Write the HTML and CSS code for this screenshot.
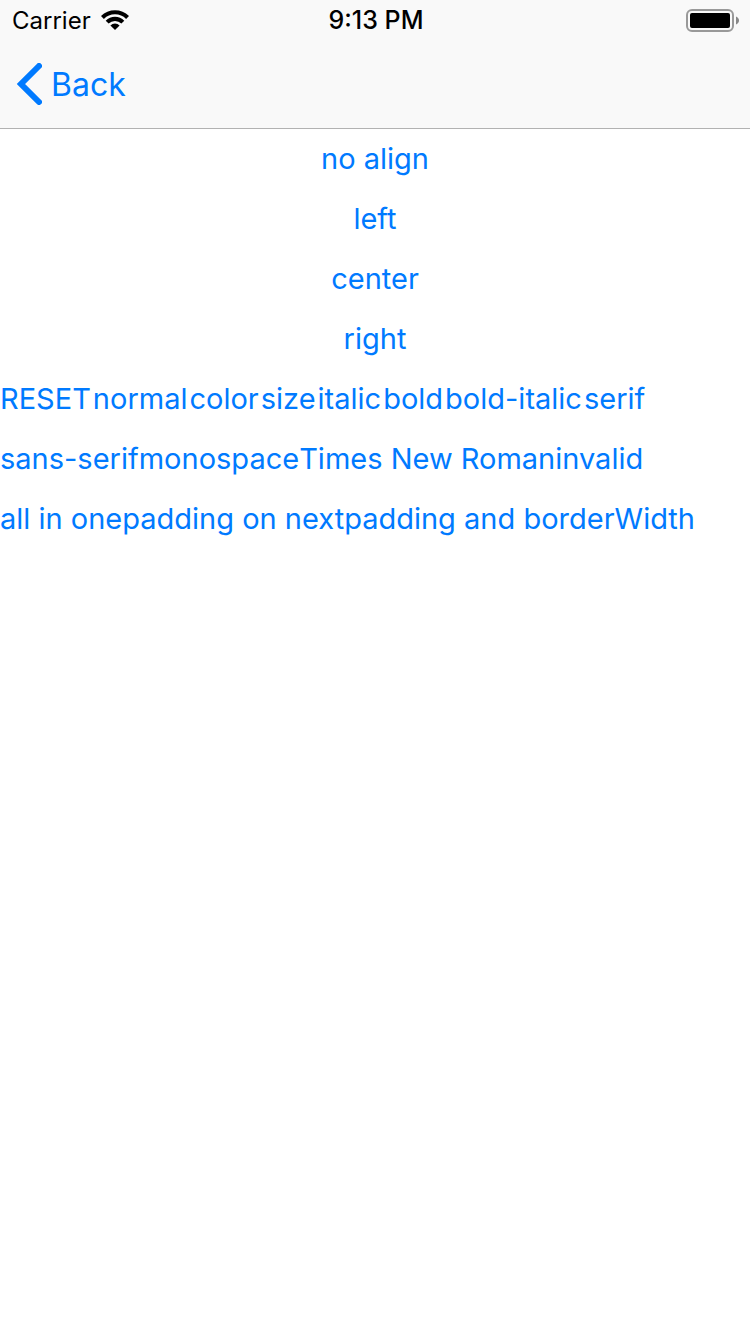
FILE: index.html
```html
<!DOCTYPE html>
<html lang="en">
<head>
<meta charset="utf-8">
<meta name="viewport" content="width=device-width, initial-scale=1">
<title>Text styles</title>
<link rel="stylesheet" href="styles.css">
</head>
<body>
<header class="top">
  <div class="status">
    <div class="status-left">
      <span>Carrier</span>
      <svg class="wifi" viewBox="0 0 28 20" aria-hidden="true">
        <path d="M14 20l4.600-4.600a6.500 6.500 0 0 0-9.200 0z"/>
        <path d="M7.600 13.600a9.200 9.200 0 0 1 12.800 0l2.900-2.900a13.200 13.200 0 0 0-18.600 0z"/>
        <path d="M2.900 8.900a15.800 15.800 0 0 1 22.200 0L28 6a20 20 0 0 0-28 0z"/>
      </svg>
    </div>
    <span class="time">9:13 PM</span>
    <svg class="battery" viewBox="0 0 54 24" aria-hidden="true">
      <rect x="1" y="2" width="46" height="21" rx="5" fill="none" stroke="#999" stroke-width="2"/>
      <rect x="4" y="5" width="40" height="15" rx="2"/>
      <path d="M50 8.500c4 1.500 4 6.500 0 8z" fill="#888"/>
    </svg>
  </div>
  <nav class="nav">
    <a class="back" href="#">
      <svg class="chevron" viewBox="0 0 26 42" aria-hidden="true"><path d="M23 3L5 21l18 18"/></svg>
      <span>Back</span>
    </a>
  </nav>
</header>
<main>
  <div class="column">
    <button>no align</button>
    <button>left</button>
    <button>center</button>
    <button>right</button>
  </div>
  <div class="row row-spaced">
    <button>RESET</button><button>normal</button><button>color</button><button>size</button><button>italic</button><button>bold</button><button>bold-italic</button><button>serif</button>
  </div>
  <div class="row">
    <button>sans-serif</button><button>monospace</button><button>Times New Roman</button><button>invalid</button>
  </div>
  <div class="row">
    <button>all in one</button><button>padding on next</button><button>padding and borderWidth</button>
  </div>
</main>
</body>
</html>
```
FILE: styles.css
```css
* { box-sizing: border-box; }
body {
  margin: 0;
  background: #fff;
  font-family: Inter, "Liberation Sans", sans-serif;
}
.top {
  background: #f9f9f9;
  border-bottom: 1px solid #b2b2b2;
}
.status {
  display: grid;
  grid-template-columns: 1fr auto 1fr;
  align-items: center;
  height: 40px;
  padding: 0 10px 0 12px;
  font-size: 24px;
}
.status-left {
  display: flex;
  align-items: center;
  gap: 10px;
}
.wifi { width: 28px; height: 20px; }
.time {
  font-size: 25px;
  font-weight: 500;
}
.battery {
  justify-self: end;
  width: 54px;
  height: 24px;
}
.nav {
  display: flex;
  align-items: center;
  height: 88px;
  padding: 0 16px;
}
.back {
  display: flex;
  align-items: center;
  gap: 9px;
  color: #007aff;
  font-size: 32px;
  text-decoration: none;
}
.chevron {
  width: 26px;
  height: 42px;
  fill: none;
  stroke: #007aff;
  stroke-width: 6;
  stroke-linecap: round;
  stroke-linejoin: miter;
}
button {
  height: 60px;
  padding: 0 0 2px;
  border: 0;
  background: none;
  color: #007aff;
  font-family: inherit;
  font-size: 29px;
  white-space: nowrap;
}
.column {
  display: flex;
  flex-direction: column;
  align-items: center;
}
.row {
  display: flex;
  flex-wrap: wrap;
}
.row-spaced { gap: 0 2px; }
```
